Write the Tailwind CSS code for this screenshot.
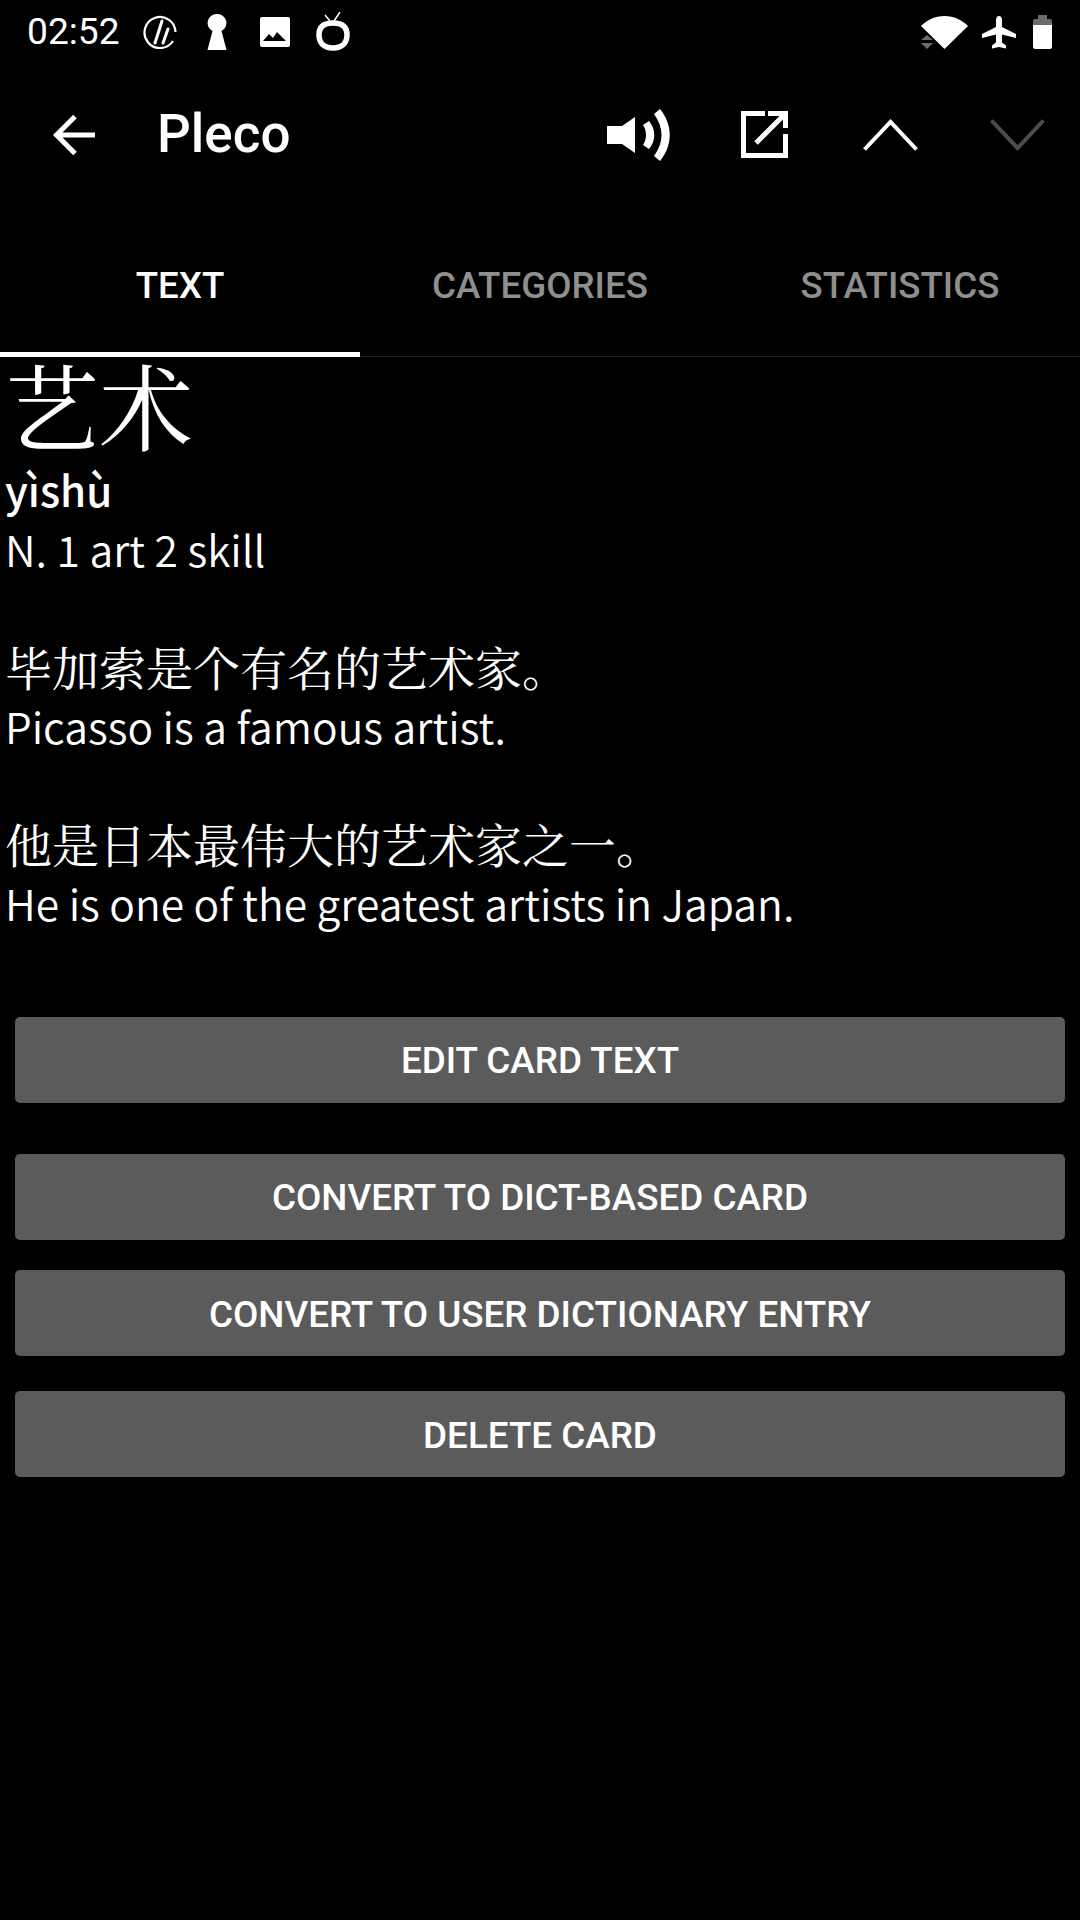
<!DOCTYPE html>
<html lang="en">
<head>
    <meta charset="UTF-8">
    <meta name="viewport" content="width=device-width, initial-scale=1.0">
    <title>Pleco</title>
    <script src="https://cdn.jsdelivr.net/npm/@tailwindcss/browser@4"></script>
</head>
<body class="bg-black text-white font-['Roboto',sans-serif] w-[1080px] h-[1920px] overflow-hidden">
    <!-- Status bar -->
    <div class="h-[64px] flex items-center pl-[27px] pr-[28px]">
        <span class="text-[37.200px] w-[92px] leading-none">02:52</span>
        <svg class="ml-[24px] w-[34px] h-[34px]" viewBox="0 0 34 34" fill="none" stroke="white">
            <path d="M30 26A15.500 15.500 0 1 1 32.500 17" stroke-width="2.200"/>
            <path d="M12 28L19 6M20 28L25 14" stroke-width="3" stroke-linecap="round"/>
        </svg>
        <svg class="ml-[30px] w-[20px] h-[36px]" viewBox="0 0 20 36" fill="white">
            <path d="M10 0a9 9 0 0 1 4.500 17L19.500 36H.5L5.500 17A9 9 0 0 1 10 0z"/>
        </svg>
        <svg class="ml-[33px] w-[30px] h-[30px]" viewBox="0 0 30 30">
            <rect width="30" height="30" rx="2" fill="white"/>
            <path d="M3 24l6-7 4 4 4-6 9 9z" fill="black"/>
        </svg>
        <svg class="ml-[26px] w-[34px] h-[39px] -mt-[2px]" viewBox="0 0 34 39" fill="none" stroke="white">
            <path d="M14 9L9 3M18 9L24 0" stroke-width="1.500"/>
            <path d="M17 11c9 0 14 4 14 12s-5 13-14 13S3 31 3 23 8 11 17 11z" stroke-width="5.500"/>
        </svg>
        <div class="ml-auto flex items-center">
            <svg class="w-[47px] h-[33px]" viewBox="0 0 47 33">
                <path d="M23.500 33L0 10C6 4 14 0 23.500 0S41 4 47 10z" fill="white"/>
                <path d="M0 24l6-5 6 5zM0 27l6 6 6-6z" fill="#6b6b6b"/>
            </svg>
            <svg class="ml-[14px] w-[34px] h-[33px]" viewBox="0 0 34 33" fill="white">
                <path d="M17 0c2 0 3 2 3 4v7l14 7v4l-14-3.500v8l4 3v3l-7-1.500-7 1.500v-3l4-3v-8L0 22v-4l14-7V4c0-2 1-4 3-4z"/>
            </svg>
            <svg class="ml-[17px] w-[19px] h-[34px]" viewBox="0 0 19 34">
                <path d="M5 0h9v4h3a2 2 0 0 1 2 2v4H0V6a2 2 0 0 1 2-2h3z" fill="#6b6b6b"/>
                <path d="M0 10h19v22a2 2 0 0 1-2 2H2a2 2 0 0 1-2-2z" fill="white"/>
            </svg>
        </div>
    </div>

    <!-- Toolbar -->
    <div class="h-[141px] flex items-center">
        <svg class="ml-[53px] w-[42px] h-[42px]" viewBox="0 0 42 42" fill="none" stroke="white" stroke-width="5">
            <path d="M42 21H3.500M22 2.500L3.500 21 22 39.500"/>
        </svg>
        <span class="ml-[62px] text-[53px] leading-none font-medium">Pleco</span>
        <div class="ml-auto flex items-center pr-[35px]">
            <svg class="w-[63px] h-[52px]" viewBox="0 0 63 52" fill="white">
                <path d="M0 17h15L28 8v36L15 35H0z"/>
                <path d="M42 12C49 20 49 32 42 40L36 36C40 30 40 22 36 16z"/>
                <path d="M53 0C66 16 66 36 53 52L47 47C57 33 57 19 47 5z"/>
            </svg>
            <svg class="ml-[71px] w-[47px] h-[47px]" viewBox="0 0 47 47" fill="none" stroke="white" stroke-width="5">
                <path d="M24 2.500H2.500v42h42V23"/>
                <path d="M15 32L44 3M27 2.500h17.500V17"/>
            </svg>
            <svg class="ml-[75px] w-[55px] h-[32px]" viewBox="0 0 55 32" fill="none" stroke="white" stroke-width="4">
                <path d="M1.500 30.500L27.500 3l26 27.500"/>
            </svg>
            <svg class="ml-[72px] w-[55px] h-[32px]" viewBox="0 0 55 32" fill="none" stroke="#4d4d4d" stroke-width="4">
                <path d="M1.500 1.500L27.500 29l26-27.500"/>
            </svg>
        </div>
    </div>

    <!-- Tabs -->
    <div class="h-[152px] grid grid-cols-3 border-b border-[#1f1f1f] text-[36.700px] font-medium">
        <div class="relative flex justify-center pt-[61px] leading-[40px]">
            TEXT
            <div class="absolute left-0 right-0 -bottom-[1px] h-[5px] bg-white"></div>
        </div>
        <div class="flex justify-center pt-[61px] leading-[40px] text-[#8f8f8f]">CATEGORIES</div>
        <div class="flex justify-center pt-[61px] leading-[40px] text-[#8f8f8f]">STATISTICS</div>
    </div>

    <!-- Card text -->
    <div class="pl-[5px] font-['Noto_Sans_CJK_SC',sans-serif] font-[350] text-[42.600px] leading-[59px]">
        <div class="font-['Noto_Serif_CJK_SC',serif] font-normal text-[94px] leading-[102px] -mt-[4px] mb-[4px]">艺术</div>
        <div class="font-medium text-[42px] mb-[1px]">yìshù</div>
        <div>N. 1 art 2 skill</div>
        <div class="h-[59px]"></div>
        <div class="font-['Noto_Serif_CJK_SC',serif] font-normal text-[47px] -mt-[1px] mb-[1px]">毕加索是个有名的艺术家。</div>
        <div>Picasso is a famous artist.</div>
        <div class="h-[59px]"></div>
        <div class="font-['Noto_Serif_CJK_SC',serif] font-normal text-[47px] -mt-[1px] mb-[1px]">他是日本最伟大的艺术家之一。</div>
        <div>He is one of the greatest artists in Japan.</div>
    </div>

    <!-- Buttons -->
    <div class="px-[15px] mt-[85px] text-[36.800px] font-medium">
        <div class="h-[86px] pt-[2px] rounded-[5px] bg-[#5b5b5c] flex items-center justify-center">EDIT CARD TEXT</div>
        <div class="h-[86px] pt-[2px] mt-[51px] rounded-[5px] bg-[#5b5b5c] flex items-center justify-center">CONVERT TO DICT-BASED CARD</div>
        <div class="h-[86px] pt-[3px] mt-[30px] rounded-[5px] bg-[#5b5b5c] flex items-center justify-center">CONVERT TO USER DICTIONARY ENTRY</div>
        <div class="h-[86px] pt-[3px] mt-[35px] rounded-[5px] bg-[#5b5b5c] flex items-center justify-center">DELETE CARD</div>
    </div>
</body>
</html>
